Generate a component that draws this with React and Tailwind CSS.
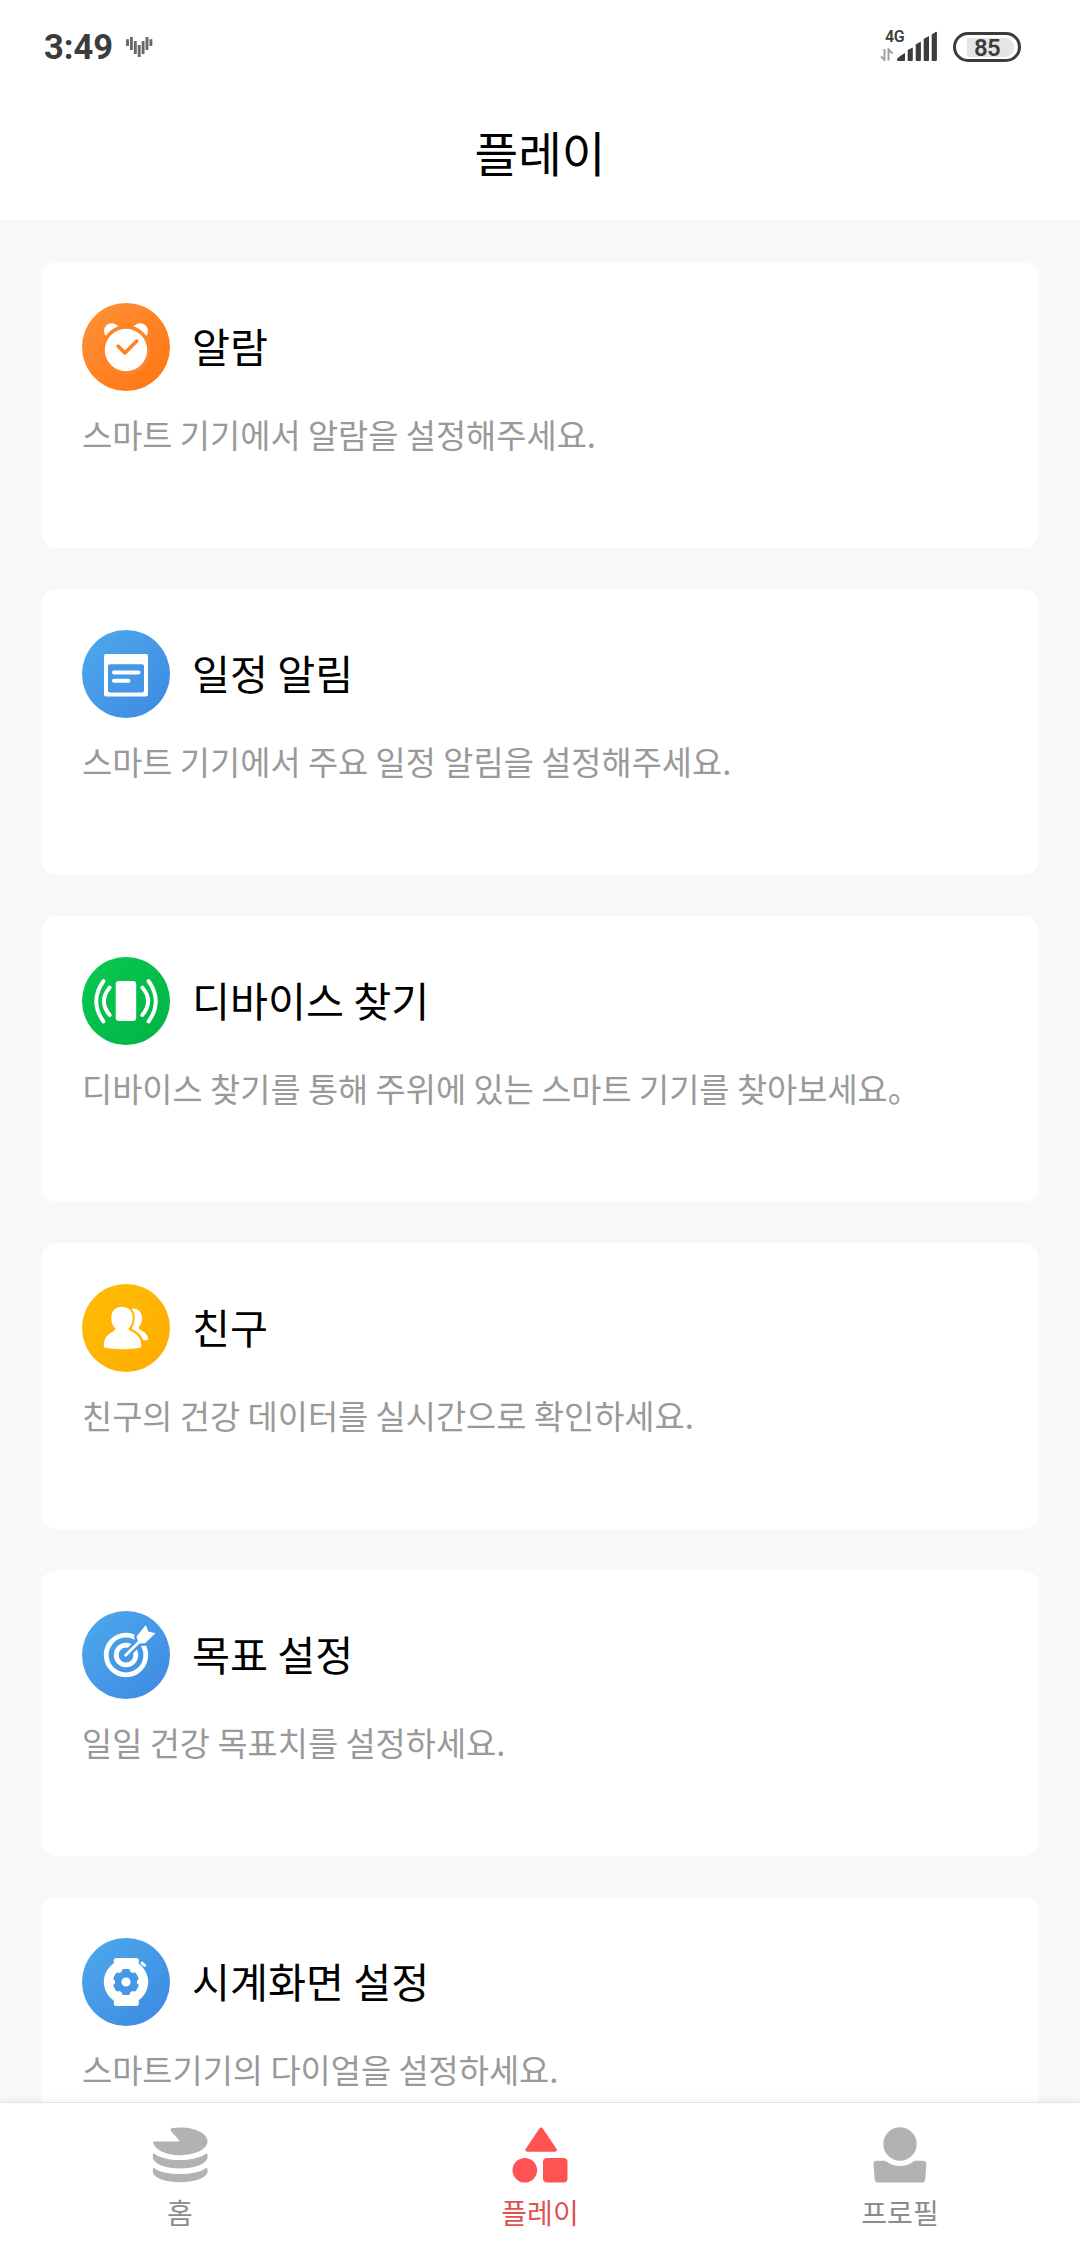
/**
 * @file App.jsx
 * @description "Play" tab of the wearable companion app.
 * Status bar, page title, feature cards and bottom navigation.
 */

// ── Feature icons (drawn on an 88x88 grid) ──────────────────────────────────
function Badge({ id, from, to, children }) {
  return (
    <svg viewBox="0 0 88 88" className="size-[88px] shrink-0">
      <defs>
        <linearGradient id={id} x1="0" y1="0" x2="1" y2="1">
          <stop offset="0.1" stopColor={from} />
          <stop offset="0.9" stopColor={to} />
        </linearGradient>
      </defs>
      <circle cx="44" cy="44" r="44" fill={`url(#${id})`} />
      {children}
    </svg>
  );
}

function AlarmIcon() {
  return (
    <Badge id="alarm" from="#ff8f35" to="#ff7614">
      <circle cx="29.8" cy="28" r="7.8" fill="#fff" />
      <circle cx="58.2" cy="28" r="7.8" fill="#fff" />
      <circle cx="44" cy="47" r="24.8" fill="#ff8427" />
      <circle cx="44" cy="47" r="21.2" fill="#fff" />
      <path d="M36 43 42.8 50 54.8 38" fill="none" stroke="#ff8020" strokeWidth="3.4" strokeLinecap="round" strokeLinejoin="round" />
    </Badge>
  );
}

function ScheduleIcon() {
  return (
    <Badge id="schedule" from="#4ca6ec" to="#3f8ce2">
      <rect x="22" y="24" width="44" height="42.5" rx="2" fill="#fff" />
      <rect x="26" y="34.3" width="36" height="28.3" rx="2" fill="#4598e6" />
      <path d="M32 42.4H56.5M32 50.7H46.5" stroke="#fff" strokeWidth="4" strokeLinecap="round" />
    </Badge>
  );
}

function FindIcon() {
  return (
    <Badge id="find" from="#07c74e" to="#02b546">
      <rect x="33.7" y="24" width="20.5" height="40" rx="3" fill="#fff" />
      <g fill="none" stroke="#fff" strokeWidth="3.9" strokeLinecap="round">
        <path d="M60.3 30.5Q72 44.3 60.3 58" />
        <path d="M66.5 24Q81 44.3 66.5 64.5" />
        <path d="M27.7 30.5Q16 44.3 27.7 58" />
        <path d="M21.5 24Q7 44.3 21.5 64.5" />
      </g>
    </Badge>
  );
}

function FriendsIcon() {
  return (
    <Badge id="friends" from="#ffbb06" to="#ffad00">
      <path d="M50 24.5C57 24 60.5 29.5 60 35C59.8 39 58 41.5 56.5 43.5C57 47 66 47.5 66.2 55.5C65 56.5 62.5 56.5 61 56C59 49.5 53 46.5 50 45Z" fill="#fff" />
      <path d="M40 22.8C47.5 22.8 50.7 28 50.7 34C50.7 39 49 42 46.5 44.5C47 49 59.4 47.5 59.3 62C59.3 63 59 63.5 58 63.8C49 65.7 32 65.7 23 63.8C22 63.5 21.7 63 21.8 62C22 48 33 49 33.5 44.5C31 42 29.3 39 29.3 34C29.3 28 32.5 22.8 40 22.8Z" fill="#fff" stroke="#ffb404" strokeWidth="4" paintOrder="stroke" />
    </Badge>
  );
}

function GoalIcon() {
  return (
    <Badge id="goal" from="#4ca6ec" to="#3f8ce2">
      <g fill="none" stroke="#fff" strokeWidth="4.8">
        <circle cx="44" cy="44" r="19.8" />
        <circle cx="44" cy="44" r="9.8" />
      </g>
      <path d="M43.5 44.5 58 30" stroke="#4598e6" strokeWidth="7.5" />
      <path d="M54.5 25.5 63.8 14 66.3 20.5 73.5 22.2 63 32.3 56.5 32.5Z" fill="#fff" stroke="#4598e6" strokeWidth="5" paintOrder="stroke" strokeLinejoin="round" />
      <path d="M43.7 44.3 58 30" stroke="#fff" strokeWidth="2.8" strokeLinecap="round" />
    </Badge>
  );
}

function WatchFaceIcon() {
  return (
    <Badge id="watch" from="#4ca6ec" to="#3f8ce2">
      <rect x="31.8" y="20" width="25" height="48" rx="2.5" fill="#fff" />
      <circle cx="44" cy="44" r="22.2" fill="#fff" />
      <path d="M60 25.2 62.7 27.4" stroke="#fff" strokeWidth="3" strokeLinecap="round" />
      <g fill="#4598e6">
        <circle cx="44" cy="44" r="11" />
        <rect x="39.8" y="31" width="8.4" height="26" rx="2" />
        <rect x="39.8" y="31" width="8.4" height="26" rx="2" transform="rotate(60 44 44)" />
        <rect x="39.8" y="31" width="8.4" height="26" rx="2" transform="rotate(120 44 44)" />
      </g>
      <circle cx="44" cy="44" r="4.6" fill="#fff" />
    </Badge>
  );
}

// ── Tab icons (drawn on a 56x56 grid) ───────────────────────────────────────
function HomeTabIcon() {
  return (
    <svg viewBox="-0.5 0 56 56" className="size-14" fill="#b2b2b2">
      <path d="M1.6 14.4H25.5Q27.6 14.4 26.3 12.8L18.6 4.2Q17 1.6 20 1Q23.5 .4 27.5 .4C43 .4 55 6.5 55 14.3S43 28.2 27.5 28.2C13 28.2 2 22.5 .7 15.8Q.4 14.4 1.6 14.4Z" />
      <path d="M.4 27.5Q1 25.5 3 27.5C8 31 17 33 27.5 33S47 31 52 27.5Q54.5 25.5 55 27.5V31C53 37.5 41 41.5 27.5 41.5S2 37.5 .4 31Z" />
      <path d="M.4 42Q1 40 3 42C8 45.3 17 47 27.5 47S47 45.3 52 42Q54.5 40 55 42V45.5C53 51.5 41 55.3 27.5 55.3S2 51.5 .4 45.5Z" />
    </svg>
  );
}

function PlayTabIcon() {
  return (
    <svg viewBox="-0.5 0 56 56" className="size-14" fill="#ff5353">
      <path d="M28.6 2.5 42.3 22.8H14.9Z" stroke="#ff5353" strokeWidth="4" strokeLinejoin="round" />
      <circle cx="12.3" cy="43.3" r="12.3" />
      <rect x="30.5" y="31" width="24.5" height="24.5" rx="4" />
    </svg>
  );
}

function ProfileTabIcon() {
  return (
    <svg viewBox="-0.7 0 56 56" className="size-14" fill="#b2b2b2">
      <circle cx="27.3" cy="17" r="16.7" />
      <path d="M4 33.7H11Q13 33.7 14.5 35Q20 39 27.3 39T40 35Q41.5 33.7 43.5 33.7H50Q54 33.7 53.7 37.5L52.5 52.5Q52.3 55.5 49.5 55.5H5Q2.200 55.5 2 52.5L.8 37.5Q.5 33.7 4 33.7Z" />
    </svg>
  );
}

const FEATURES = [
  { title: "알람", desc: "스마트 기기에서 알람을 설정해주세요.", Icon: AlarmIcon },
  { title: "일정 알림", desc: "스마트 기기에서 주요 일정 알림을 설정해주세요.", Icon: ScheduleIcon },
  { title: "디바이스 찾기", desc: "디바이스 찾기를 통해 주위에 있는 스마트 기기를 찾아보세요。", Icon: FindIcon },
  { title: "친구", desc: "친구의 건강 데이터를 실시간으로 확인하세요.", Icon: FriendsIcon },
  { title: "목표 설정", desc: "일일 건강 목표치를 설정하세요.", Icon: GoalIcon },
  { title: "시계화면 설정", desc: "스마트기기의 다이얼을 설정하세요.", Icon: WatchFaceIcon },
];

const TABS = [
  { label: "홈", Icon: HomeTabIcon },
  { label: "플레이", Icon: PlayTabIcon, active: true },
  { label: "프로필", Icon: ProfileTabIcon },
];

function StatusBar() {
  return (
    <div className="flex h-[94px] items-center justify-between pl-11 pr-[59px] font-['Roboto',sans-serif] font-bold text-[#3c3c3c]">
      <div className="flex items-center gap-[13px]">
        <span className="text-[34.5px] leading-none">3:49</span>
        <svg viewBox="0 0 27 20" className="h-5 w-[27px]" stroke="#686868" strokeWidth="2.9">
          <path d="M1.5 2.3V9M5.4 0V13M9.3 4V17M13.2 8V20M17.1 4V17M21 0V13M24.9 2.3V9" />
        </svg>
      </div>
      <div className="flex items-center gap-4">
        <div className="flex items-end pb-0.5">
          <div className="flex w-[17px] flex-col items-start gap-[5px]">
            <span className="ml-[5px] text-base font-semibold leading-3 tracking-[-0.5px]">4G</span>
            <svg viewBox="0 0 13 13" className="h-[13px] w-[13px]" fill="none" stroke="#a0a0a0" strokeWidth="2">
              <path d="M4.5 1V12L1 8.5M8.5 12.5V1.5L12.5 5.5" />
            </svg>
          </div>
          <svg viewBox="0 0 40 30" className="h-[30px] w-10" fill="#3c3c3c">
            <path d="M1 30Q0 30 0 28.5Q0 26.5 8 22V29Q8 30 7 30Z" />
            <path d="M10.7 19 15.8 16.5V29Q15.8 30 15 30H11.7Q10.7 30 10.7 29Z" />
            <path d="M18.7 13.5 23.9 10.5V29Q23.9 30 23 30H19.7Q18.7 30 18.7 29Z" />
            <path d="M26.7 8 32 5V29Q32 30 31 30H27.7Q26.7 30 26.7 29Z" />
            <path d="M34.7 3.5 39 .8Q39.9 .5 39.9 1.5V29Q39.9 30 39 30H35.7Q34.7 30 34.7 29Z" />
          </svg>
        </div>
        <div className="flex h-[30px] w-[68px] items-center justify-center rounded-full border-3 border-[#3c3c3c]">
          <div className="ml-[7px] flex h-[19px] w-[47px] items-center justify-center rounded-l-xs rounded-r-[9px] bg-[#e5e5e5] pr-[7px] pt-px text-2xl font-semibold leading-none tracking-[-0.8px]">
            85
          </div>
        </div>
      </div>
    </div>
  );
}

function FeatureCard({ title, desc, Icon }) {
  return (
    <section className="h-[286px] shrink-0 rounded-2xl bg-white p-[41px]">
      <div className="flex items-center gap-[22px]">
        <Icon />
        <h2 className="pb-1 text-[41.3px] leading-[60px] text-black">{title}</h2>
      </div>
      <p className="mt-[19px] whitespace-nowrap text-[32.8px] leading-[48px] text-[#999999]">{desc}</p>
    </section>
  );
}

export default function App() {
  return (
    <div className="flex h-[2246px] w-[1080px] flex-col overflow-hidden bg-[#f8f8f8] font-['Noto_Sans_CJK_KR',sans-serif]">
      {/* ── Header ─────────────────────────────────────────────────────────── */}
      <header className="h-[220px] shrink-0 bg-white">
        <StatusBar />
        <h1 className="pt-[22px] text-center text-[47.5px] leading-[72px] text-black">플레이</h1>
      </header>

      {/* ── Feature list ───────────────────────────────────────────────────── */}
      <main className="flex min-h-0 flex-1 flex-col gap-[41px] overflow-hidden px-[41px] pt-[42px]">
        {FEATURES.map((feature) => (
          <FeatureCard key={feature.title} {...feature} />
        ))}
      </main>

      {/* ── Bottom navigation ──────────────────────────────────────────────── */}
      <nav className="z-10 grid h-[144px] shrink-0 grid-cols-3 border-t border-[#e4e4e4] bg-white shadow-[0_-2px_8px_rgba(0,0,0,0.05)]">
        {TABS.map(({ label, Icon, active }) => (
          <button key={label} className="flex flex-col items-center pt-6">
            <Icon />
            <span className={active ? "mt-2 text-[28px] leading-[42px] text-[#e05252]" : "mt-2 text-[28px] leading-[42px] text-[#8c8c8c]"}>
              {label}
            </span>
          </button>
        ))}
      </nav>
    </div>
  );
}
